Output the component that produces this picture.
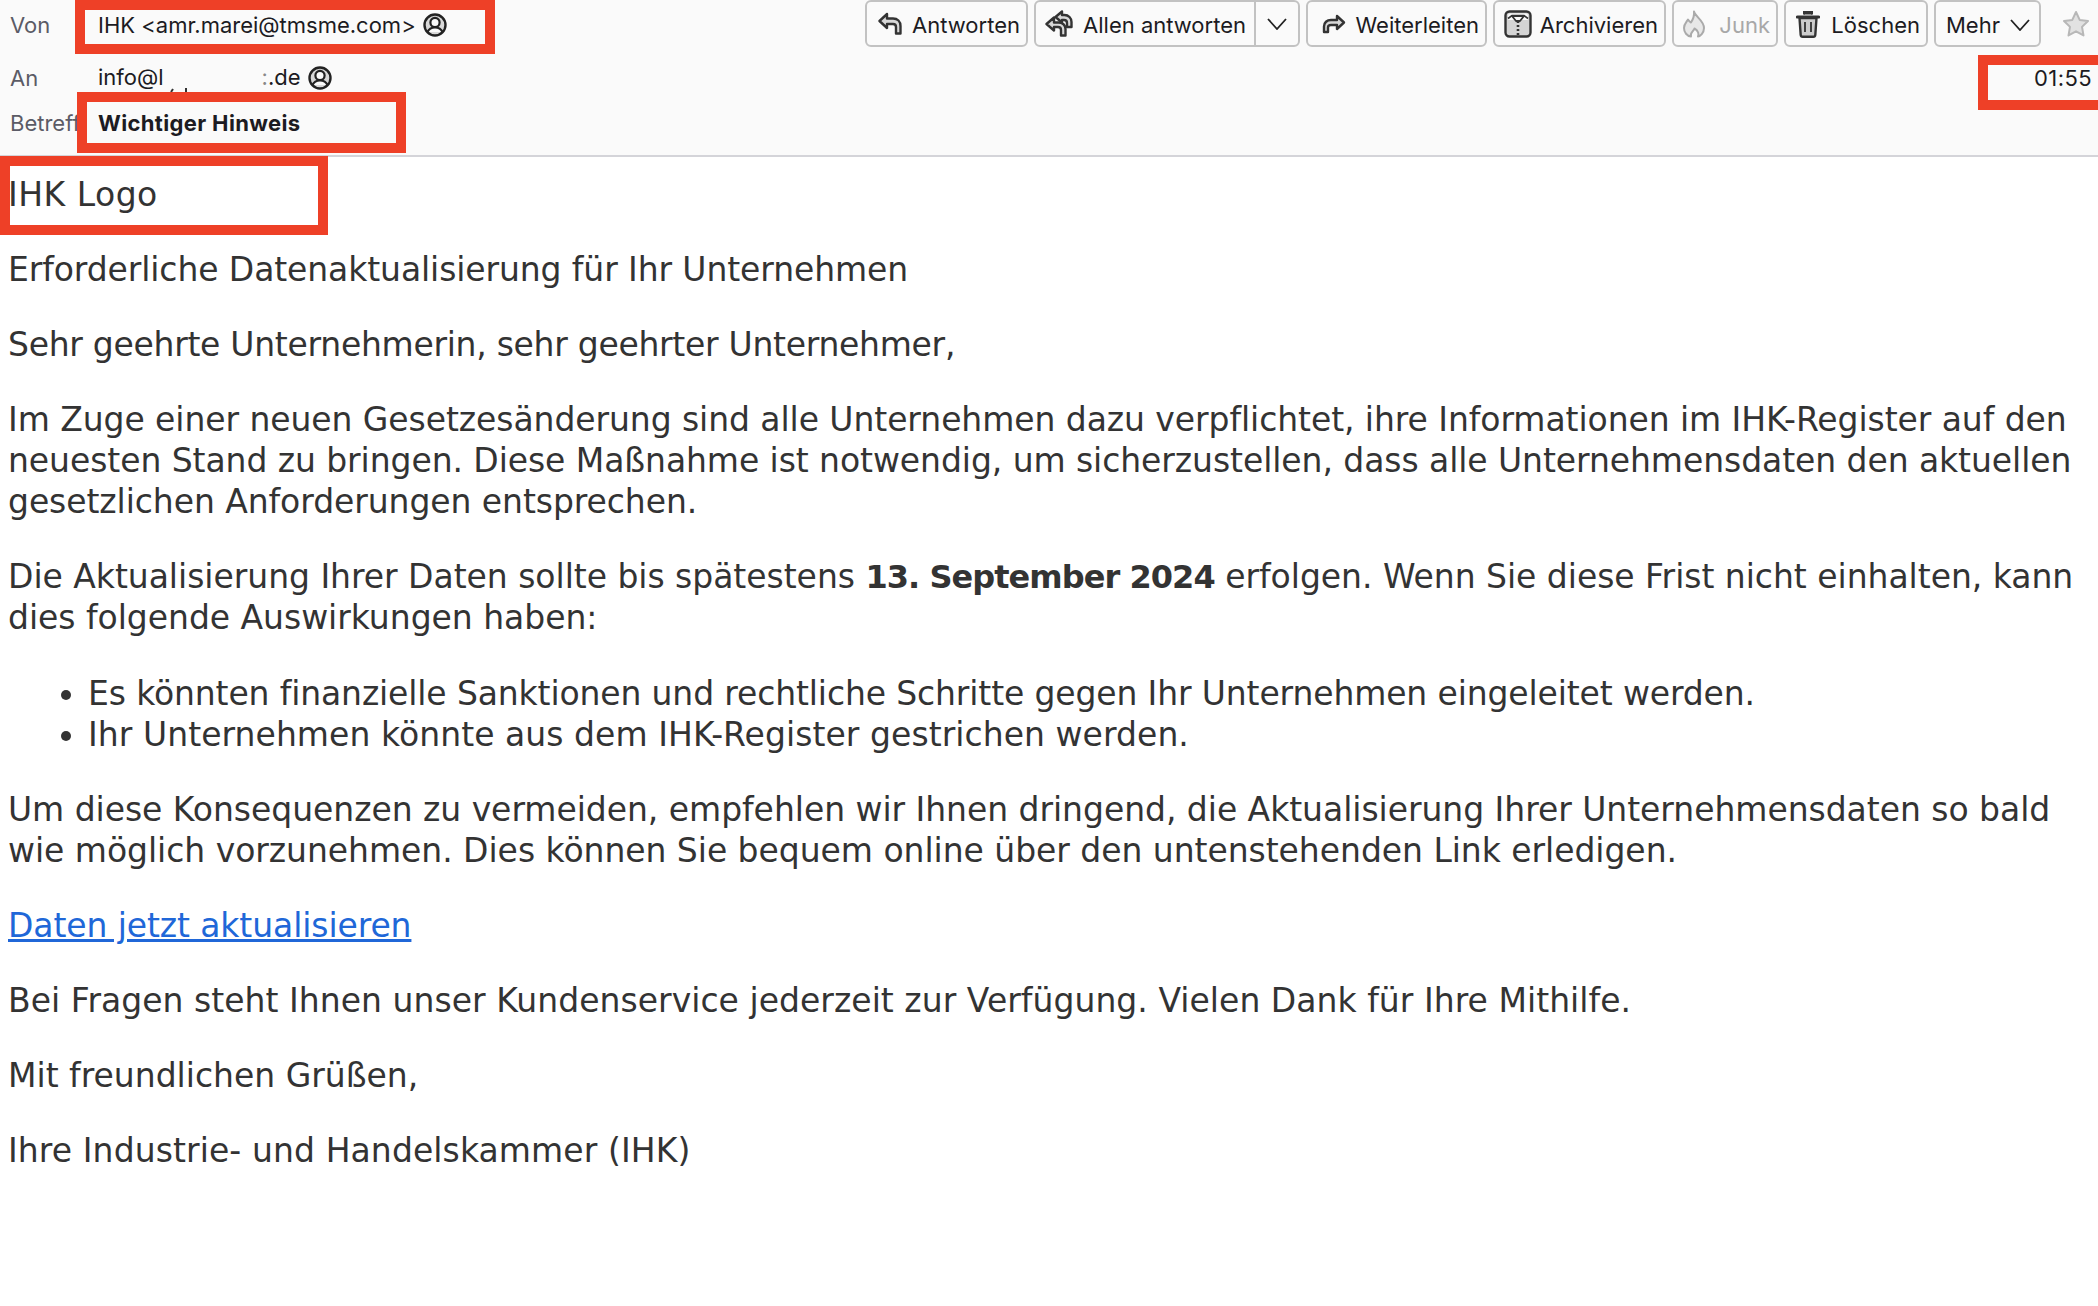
<div class="page">
  <header class="head">
    <div class="row1">
      <div class="field"><span class="lbl">Von</span><span class="val">IHK &lt;amr.marei@tmsme.com&gt;</span>
        <svg class="person" viewBox="0 0 24 24"><circle cx="12" cy="12" r="10.5" fill="#d8d8d8" stroke="#222" stroke-width="2.4"/><circle cx="12" cy="9.5" r="4.6" fill="#fafafa" stroke="#222" stroke-width="2.2"/><path d="M4.5 19c1.5-3.5 4-4.5 7.500-4.500s6 1 7.500 4.500" fill="#fafafa" stroke="#222" stroke-width="2.2"/></svg>
      </div>
      <div class="tools">
        <button class="btn b-reply"><svg class="i24" viewBox="0 0 24 24"><path d="M9 2 1.500 9 9 16v-4h6c2 0 3 1 3 3v6.500h4.500V14c0-4.500-3-7.500-7.500-7.500H9z" fill="#d8d8d8" stroke="#333" stroke-width="2.400" stroke-linejoin="round"/></svg>Antworten</button>
        <div class="split">
          <button class="btn in b-all"><svg class="i30" viewBox="0 0 30 27"><path d="M17 1.500 10.500 7l6.500 5.500V10h2c2 0 3 1 3 3v4h4.500v-5c0-4-3-7-7-7H17z" fill="#d8d8d8" stroke="#333" stroke-width="2.400" stroke-linejoin="round"/><path d="M9 7.500 1.500 14 9 20.500V17h4c2 0 3 1 3 3v5.500h4.500V19c0-4-3-6.500-7-6.500H9z" fill="#d8d8d8" stroke="#333" stroke-width="2.400" stroke-linejoin="round"/></svg>Allen antworten</button>
          <button class="btn in caret" aria-label="Mehr Optionen"><svg class="chev" viewBox="0 0 20 12"><path d="M1 1l9 10 9-10" fill="none" stroke="#222" stroke-width="1.800"/></svg></button>
        </div>
        <button class="btn b-fwd"><svg class="i24" viewBox="0 0 24 24"><path d="M15 4l7 6.500-7 6.500v-4H9c-2 0-3 1-3 2.500V20H2v-5.500C2 10.500 5 8 9 8h6z" fill="#d8d8d8" stroke="#333" stroke-width="2.400" stroke-linejoin="round"/></svg>Weiterleiten</button>
        <button class="btn b-arch"><svg class="i28" viewBox="0 0 28 28"><rect x="1.500" y="1.500" width="25" height="25" rx="4" fill="#d4d4d4" stroke="#333" stroke-width="2.400"/><path d="M4 10V5.500a2 2 0 0 1 2-2h16a2 2 0 0 1 2 2V10" fill="#fafafa" stroke="none"/><path d="M4 8.500 8 5.500h12l4 3" fill="none" stroke="#333" stroke-width="1.600"/><path d="M8 6h12l-4 5h-4z" fill="#fafafa" stroke="#333" stroke-width="1.800" stroke-linejoin="round"/><path d="M14 11v15" stroke="#333" stroke-width="2.600" stroke-dasharray="2 2"/></svg>Archivieren</button>
        <button class="btn off b-junk"><svg class="i24h" viewBox="0 0 24 28"><path d="M12 1.500c1 5 10 9 10 16.500 0 5-4 8.500-6 8.500 1-2 .5-6-3.500-8-1 3-5 4.500-3.500 8C5 26 2 22.500 2 18c0-4 2.500-6 4-8.500C7 11 8 12 9 12.500c2-3 3.500-6.500 3-11z" fill="#e8e8e8" stroke="#aaa" stroke-width="2" stroke-linejoin="round"/></svg>Junk</button>
        <button class="btn b-del"><svg class="i24h" viewBox="0 0 24 28"><path d="M3.500 8h17l-1.200 17a2 2 0 0 1-2 1.800H6.700a2 2 0 0 1-2-1.800z" fill="#ccc" stroke="#333" stroke-width="2.400" stroke-linejoin="round"/><path d="M1.500 7h21" stroke="#333" stroke-width="3.200" stroke-linecap="round"/><path d="M8 4.500V2h8v2.500" fill="#333" stroke="#333" stroke-width="2"/><path d="M9 12v10M15 12v10" stroke="#333" stroke-width="1.800"/></svg>Löschen</button>
        <button class="btn b-more">Mehr<svg class="chev" viewBox="0 0 20 12"><path d="M1 1l9 10 9-10" fill="none" stroke="#222" stroke-width="1.800"/></svg></button>
        <svg class="star" viewBox="0 0 28 28"><path d="M14 2l3.700 7.900 8.300 1.100-6 5.900 1.500 8.500L14 21.300 6.500 25.400 8 16.900 2 11l8.300-1.100z" fill="#e2e2e2" stroke="#b8b8b8" stroke-width="2" stroke-linejoin="round"/></svg>
      </div>
    </div>
    <div class="row2">
      <div class="field"><span class="lbl">An</span><span class="val">info@l<svg class="bits" viewBox="0 0 30 24"><path d="M9 21l-2 3M22 20v4" stroke="#333" stroke-width="2"/></svg><span class="gap"></span><span class="ghost">:</span>.de</span>
        <svg class="person" viewBox="0 0 24 24"><circle cx="12" cy="12" r="10.5" fill="#d8d8d8" stroke="#222" stroke-width="2.4"/><circle cx="12" cy="9.5" r="4.6" fill="#fafafa" stroke="#222" stroke-width="2.2"/><path d="M4.5 19c1.5-3.5 4-4.5 7.500-4.500s6 1 7.500 4.500" fill="#fafafa" stroke="#222" stroke-width="2.2"/></svg>
      </div>
      <span class="time">01:55</span>
    </div>
    <div class="field row3"><span class="lbl">Betreff</span><span class="val subj">Wichtiger Hinweis</span></div>
  </header>

  <main class="mail">
    <p class="t-logo">IHK Logo</p>
    <p class="t-a">Erforderliche Datenaktualisierung für Ihr Unternehmen</p>
    <p class="t-b">Sehr geehrte Unternehmerin, sehr geehrter Unternehmer,</p>
    <p class="t-c">Im Zuge einer neuen Gesetzesänderung sind alle Unternehmen dazu verpflichtet, ihre Informationen im IHK-Register auf den neuesten Stand zu bringen. Diese Maßnahme ist notwendig, um sicherzustellen, dass alle Unternehmensdaten den aktuellen gesetzlichen Anforderungen entsprechen.</p>
    <p class="t-d">Die Aktualisierung Ihrer Daten sollte bis spätestens <strong>13. September 2024</strong> erfolgen. Wenn Sie diese Frist nicht einhalten, kann dies folgende Auswirkungen haben:</p>
    <ul>
      <li class="t-e">Es könnten finanzielle Sanktionen und rechtliche Schritte gegen Ihr Unternehmen eingeleitet werden.</li>
      <li class="t-f">Ihr Unternehmen könnte aus dem IHK-Register gestrichen werden.</li>
    </ul>
    <p class="t-g">Um diese Konsequenzen zu vermeiden, empfehlen wir Ihnen dringend, die Aktualisierung Ihrer Unternehmensdaten so bald wie möglich vorzunehmen. Dies können Sie bequem online über den untenstehenden Link erledigen.</p>
    <p class="t-a"><a href="#top">Daten jetzt aktualisieren</a></p>
    <p class="t-h">Bei Fragen steht Ihnen unser Kundenservice jederzeit zur Verfügung. Vielen Dank für Ihre Mithilfe.</p>
    <p>Mit freundlichen Grüßen,</p>
    <p class="t-i">Ihre Industrie- und Handelskammer (IHK)</p>
  </main>

  <div class="mark m1"></div>
  <div class="mark m2"></div>
  <div class="mark m3"></div>
  <div class="mark m4"></div>
</div>

<style>
  :global(body) { margin: 0; background: #fff; }
  .page { position: relative; width: 2098px; height: 1306px; overflow: hidden; font-family: Inter, "Liberation Sans", sans-serif; }
  .head { box-sizing: border-box; height: 157px; background: #fafafa; border-bottom: 2px solid #d4d4d9; font-size: 22px; color: #1c1b22; }
  .row1, .row2 { display: flex; justify-content: space-between; align-items: flex-start; }
  .row1 { height: 54px; }
  .row1 .field { height: 50px; }
  .row2 { height: 47px; padding-right: 6px; }
  .field { display: flex; align-items: center; }
  .row2 .field { height: 48px; }
  .row3 { height: 44px; }
  .lbl { width: 98px; padding-left: 10px; box-sizing: border-box; color: #5b5b66; flex: none; }
  .val { white-space: nowrap; }
  .subj { font-weight: 700; letter-spacing: 0.35px; }
  .person { width: 24px; height: 24px; margin-left: 7px; }
  .bits { width: 30px; height: 24px; vertical-align: -7px; }
  .gap { display: inline-block; width: 68px; }
  .ghost { color: #888; }
  .time { line-height: 48px; letter-spacing: 0.4px; }

  .tools { display: flex; gap: 6px; align-items: center; margin-right: 8px; }
  .btn { box-sizing: border-box; display: flex; align-items: center; justify-content: flex-end; gap: 10px; height: 47px; padding: 2px 6px 0 0; background: #fafafa; border: 2px solid #c2c2c2; border-radius: 6px; color: #1c1b22; font: 22px Inter, "Liberation Sans", sans-serif; white-space: nowrap; }
  .b-reply { width: 163px; }
  .b-fwd { width: 181px; }
  .b-arch { width: 173px; gap: 8px; }
  .b-junk { width: 106px; gap: 13px; }
  .b-del { width: 144px; gap: 11px; }
  .b-more { width: 107px; padding-right: 9px; }
  .i24 { width: 24px; height: 24px; margin-top: -2px; flex: none; }
  .i24h { width: 24px; height: 28px; margin-top: -2px; flex: none; }
  .i28 { width: 28px; height: 28px; margin-top: -2px; flex: none; }
  .i30 { width: 30px; height: 27px; margin-top: -2px; flex: none; }
  .chev { width: 20px; height: 12px; flex: none; }
  .off { color: #a8a8a8; }
  .split { display: flex; box-sizing: border-box; width: 266px; height: 47px; border: 2px solid #c2c2c2; border-radius: 6px; }
  .in { height: 43px; border: 0; border-radius: 0; background: transparent; }
  .b-all { width: 218px; gap: 8px; padding-right: 8px; }
  .caret { width: 44px; border-left: 2px solid #c2c2c2; justify-content: center; padding: 0; }
  .star { width: 28px; height: 28px; margin-left: 15px; }

  .mail { padding: 0 8px; font-family: "DejaVu Sans", sans-serif; font-size: 33px; line-height: 41px; color: #333; }
  p { margin: 0 0 34px; }
  p:first-child { margin-top: 17px; }
  ul { margin: 0 0 34px; padding: 1px 0 0 80px; }
  a { color: #2067d8; }
  strong { font-size: 32px; line-height: 1; letter-spacing: -0.95px; }
  .t-logo { letter-spacing: 0.5px; }
  .t-a { letter-spacing: -0.1px; }
  .t-b { letter-spacing: -0.28px; }
  .t-c { letter-spacing: -0.07px; }
  .t-d { letter-spacing: -0.03px; }
  .t-e { letter-spacing: -0.13px; }
  .t-f { letter-spacing: 0.06px; }
  .t-g { letter-spacing: -0.04px; }
  .t-h { letter-spacing: 0.04px; }
  .t-i { letter-spacing: 0.1px; }

  .mark { position: absolute; box-sizing: border-box; border: 10px solid #ee4027; }
  .m1 { left: 75px; top: 0; width: 420px; height: 54px; }
  .m2 { left: 77px; top: 92px; width: 329px; height: 61px; }
  .m3 { left: 0; top: 156px; width: 328px; height: 79px; }
  .m4 { left: 1978px; top: 55px; width: 130px; height: 55px; }
</style>
